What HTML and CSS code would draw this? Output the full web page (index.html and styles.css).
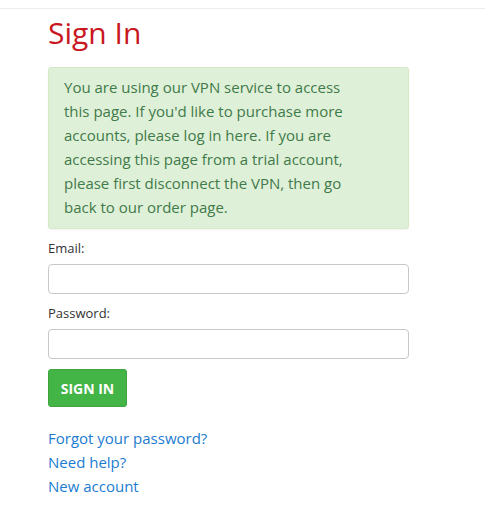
FILE: index.html
```html
<!DOCTYPE html>
<html lang="en">
<head>
    <meta charset="UTF-8">
    <meta name="viewport" content="width=device-width, initial-scale=1.0">
    <title>Sign In</title>
    <link rel="stylesheet" href="styles.css">
</head>
<body>
    <div class="topbar"></div>
    <main class="page">
        <h1>Sign In</h1>
        <div class="alert">
            You are using our VPN service to access this page. If you'd like to purchase more accounts, please log in here. If you are accessing this page from a trial account, please first disconnect the VPN, then go back to our order page.
        </div>
        <form class="login-form">
            <label for="email">Email:</label>
            <input type="text" id="email" name="email">
            <label for="password">Password:</label>
            <input type="password" id="password" name="password">
            <button type="submit" class="btn-signin">SIGN IN</button>
        </form>
        <ul class="links">
            <li><a href="#">Forgot your password?</a></li>
            <li><a href="#">Need help?</a></li>
            <li><a href="#">New account</a></li>
        </ul>
    </main>
</body>
</html>
```

FILE: styles.css
```css
body {
    font-family: "Open Sans", Arial, sans-serif;
    margin: 0;
    padding: 0;
    background: #fff;
    color: #333;
}

.topbar {
    height: 8px;
    border-bottom: 1px solid #ececec;
}

.page {
    padding: 0 76px 0 48px;
}

h1 {
    font-weight: 400;
    font-size: 30px;
    color: #c8171e;
    margin: 4px 0 14px;
    line-height: 40px;
}

.alert {
    background: #dff0d8;
    border: 1px solid #d6e9c6;
    color: #3f7a4a;
    border-radius: 3px;
    padding: 7px 52px 9px 15px;
    font-size: 15px;
    line-height: 24px;
    box-shadow: 0 1px 2px rgba(0,0,0,0.05);
}

.login-form {
    display: flex;
    flex-direction: column;
    align-items: flex-start;
    margin-top: 10px;
}

.login-form label {
    font-size: 13px;
    line-height: 18px;
    margin-bottom: 7px;
}

.login-form input {
    width: 100%;
    height: 30px;
    box-sizing: border-box;
    border: 1px solid #c8c8c8;
    border-radius: 4px;
    margin-bottom: 10px;
    font-size: 14px;
    padding: 4px 8px;
}

.btn-signin {
    background: #43b446;
    border: 1px solid #3ca33f;
    color: #fff;
    font-family: inherit;
    font-weight: 700;
    font-size: 14px;
    border-radius: 3px;
    width: 79px;
    height: 38px;
    padding: 0;
}

.links {
    list-style: none;
    padding: 0;
    margin: 19px 0 0;
}

.links li {
    font-size: 15px;
    line-height: 24px;
}

.links a {
    color: #1b7ccf;
    text-decoration: none;
}
```
